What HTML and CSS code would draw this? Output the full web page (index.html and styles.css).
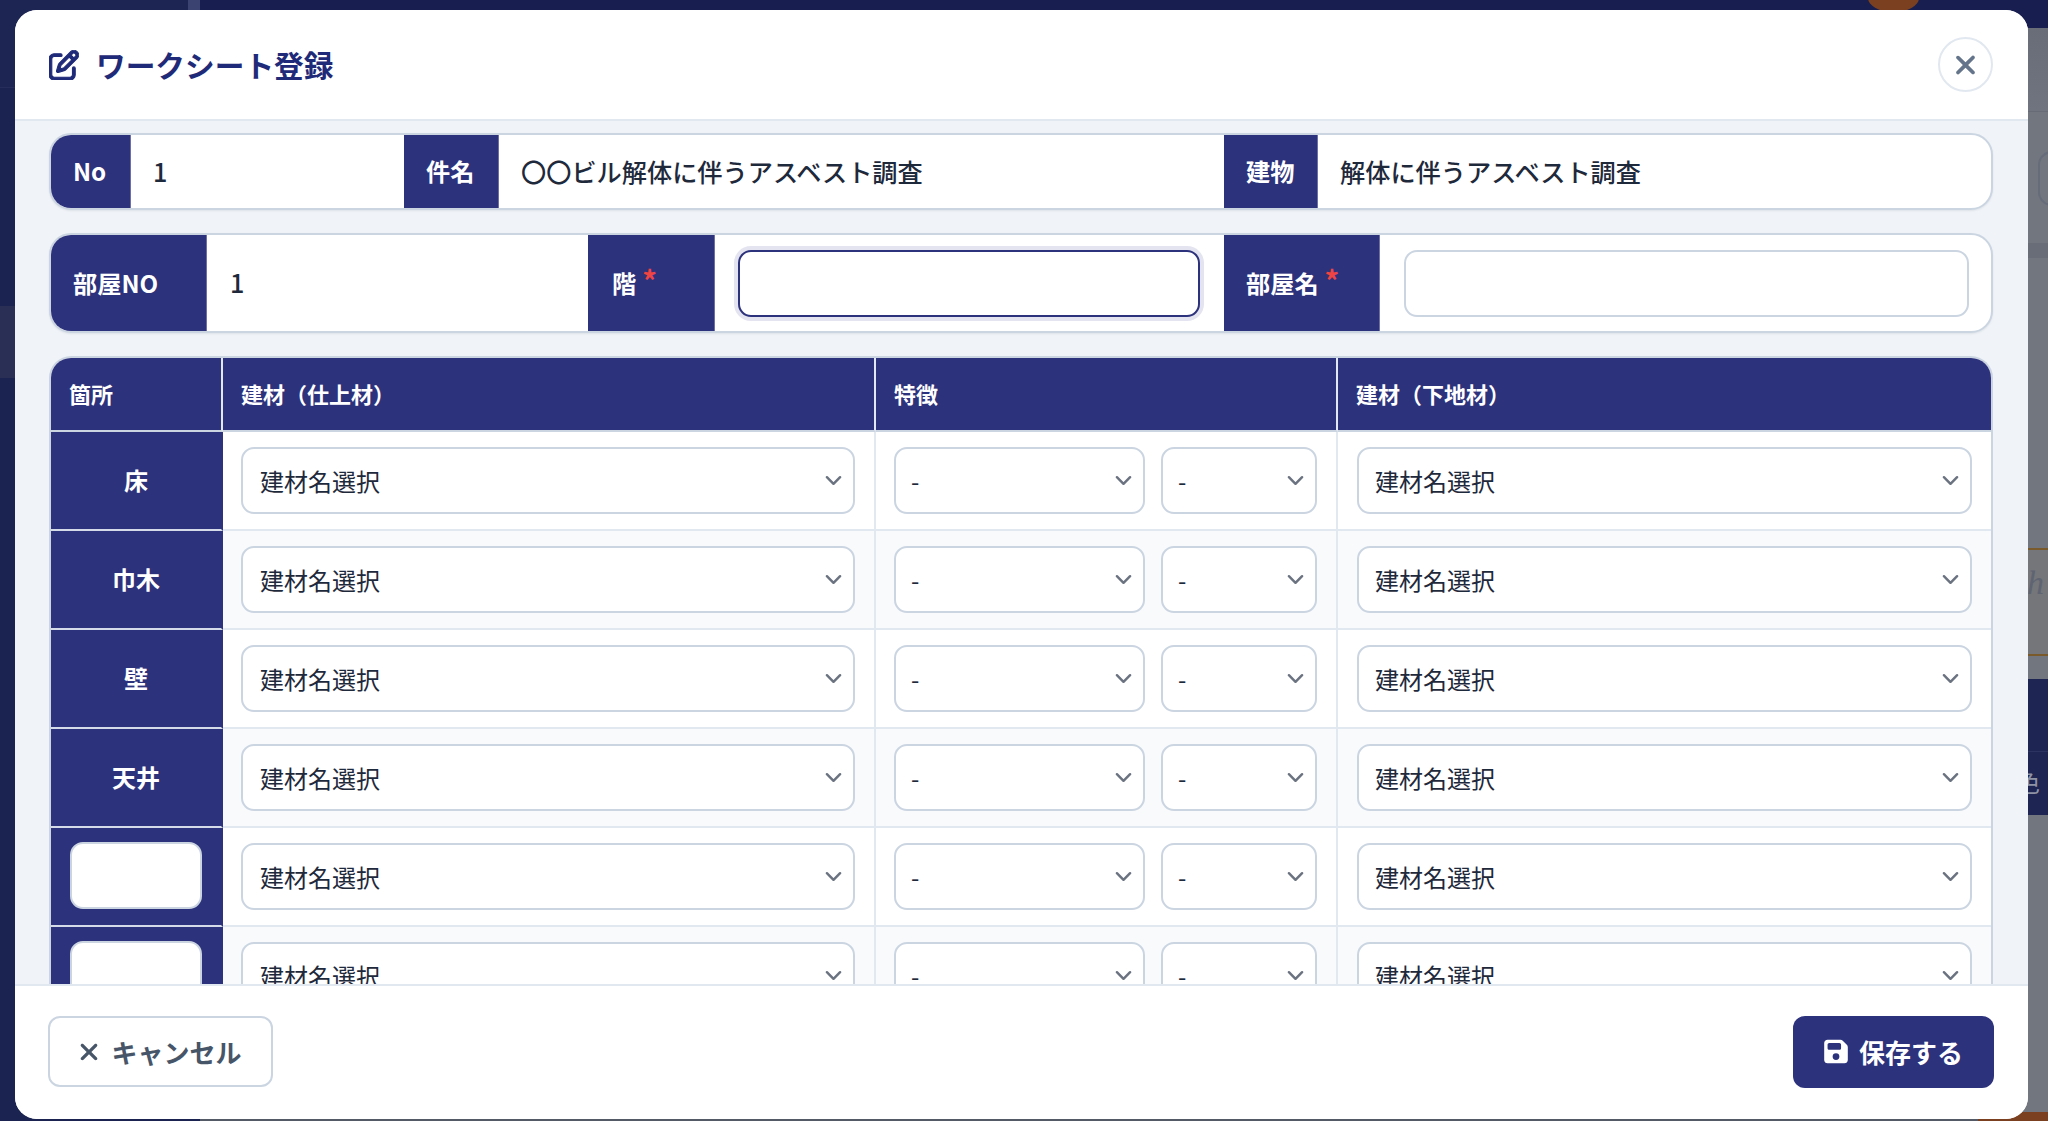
FILE: index.html
```html
<!DOCTYPE html>
<html lang="ja">
<head>
<meta charset="utf-8">
<title>ワークシート登録</title>
<link rel="stylesheet" href="styles.css">
</head>
<body>
<div class="page">
  <aside class="sidebar">
    <div class="side-logo"></div>
    <div class="side-nav"></div>
    <div class="side-active"></div>
    <div class="side-rest"></div>
  </aside>
  <div class="side-edge"></div>
  <main class="main">
    <div class="topbar"><span class="avatar"></span></div>
    <div class="bg-row bg-a"></div>
    <div class="bg-row bg-b"><div class="bg-box"></div></div>
    <div class="bg-row bg-c"></div>
    <div class="bg-row bg-d"></div>
    <div class="bg-row bg-e"><span class="bg-hand">h</span></div>
    <div class="bg-row bg-f"></div>
    <div class="bg-row bg-g"></div>
    <div class="bg-row bg-h"><span class="bg-char">色</span></div>
    <div class="bg-row bg-i"></div>
    <div class="bg-row bg-j"><span class="bg-brown"></span></div>
  </main>
</div>

<section class="modal">
  <header class="modal-head">
    <h1 class="modal-title">
      <svg class="title-icon" viewBox="0 0 512 512"><path d="M441 58.9L453.1 71c9.4 9.4 9.4 24.6 0 33.9L424 134.1 377.9 88 407 58.9c9.4-9.4 24.6-9.4 33.9 0zM209.8 256.2L344 121.9 390.1 168 255.8 302.2c-2.9 2.9-6.5 5-10.4 6.1l-58.5 16.7 16.7-58.5c1.1-3.9 3.2-7.5 6.1-10.4zM373.1 25L175.8 222.2c-8.7 8.7-15 19.4-18.3 31.1l-28.6 100c-2.4 8.4-.1 17.4 6.1 23.6s15.2 8.5 23.6 6.1l100-28.6c11.8-3.4 22.5-9.7 31.1-18.3L487 138.9c28.1-28.1 28.1-73.7 0-101.8L474.9 25C446.8-3.1 401.2-3.1 373.1 25zM88 64C39.4 64 0 103.4 0 152V424c0 48.6 39.4 88 88 88H360c48.6 0 88-39.4 88-88V312c0-13.3-10.7-24-24-24s-24 10.7-24 24V424c0 22.1-17.9 40-40 40H88c-22.1 0-40-17.9-40-40V152c0-22.1 17.9-40 40-40H200c13.3 0 24-10.7 24-24s-10.7-24-24-24H88z"/></svg>
      <span>ワークシート登録</span>
    </h1>
    <button class="close-btn" type="button" aria-label="閉じる">
      <svg class="close-icon" viewBox="0 0 384 512"><path d="M342.6 150.6c12.5-12.5 12.5-32.8 0-45.3s-32.8-12.5-45.3 0L192 210.7 86.6 105.4c-12.5-12.5-32.8-12.5-45.3 0s-12.5 32.8 0 45.3L146.7 256 41.4 361.4c-12.5 12.5-12.5 32.8 0 45.3s32.8 12.5 45.3 0L192 301.3 297.4 406.6c12.5 12.5 32.8 12.5 45.3 0s12.5-32.8 0-45.3L237.3 256 342.6 150.6z"/></svg>
    </button>
  </header>

  <div class="modal-body">
    <div class="panel panel-info">
      <div class="label w-no">No</div>
      <div class="value w-no-v">1</div>
      <div class="label w-subject">件名</div>
      <div class="value w-subject-v">〇〇ビル解体に伴うアスベスト調査</div>
      <div class="label w-building">建物</div>
      <div class="value grow">解体に伴うアスベスト調査</div>
    </div>

    <div class="panel panel-room">
      <div class="label w-roomno">部屋NO</div>
      <div class="value w-roomno-v">1</div>
      <div class="label w-floor">階<span class="req">*</span></div>
      <div class="field w-floor-v"><input class="text-input is-focus" type="text"></div>
      <div class="label w-roomname">部屋名<span class="req">*</span></div>
      <div class="field field-last grow"><input class="text-input" type="text"></div>
    </div>

    <table class="sheet">
      <colgroup>
        <col class="c-place"><col class="c-finish"><col class="c-feature"><col class="c-base">
      </colgroup>
      <thead>
        <tr><th>箇所</th><th>建材（仕上材）</th><th>特徴</th><th>建材（下地材）</th></tr>
      </thead>
      <tbody>
        <tr>
          <th class="place">床</th>
          <td><select class="sel"><option>建材名選択</option></select></td>
          <td><div class="pair"><select class="sel sel-wide"><option>-</option></select><select class="sel sel-narrow"><option>-</option></select></div></td>
          <td><select class="sel sel-base"><option>建材名選択</option></select></td>
        </tr>
        <tr>
          <th class="place">巾木</th>
          <td><select class="sel"><option>建材名選択</option></select></td>
          <td><div class="pair"><select class="sel sel-wide"><option>-</option></select><select class="sel sel-narrow"><option>-</option></select></div></td>
          <td><select class="sel sel-base"><option>建材名選択</option></select></td>
        </tr>
        <tr>
          <th class="place">壁</th>
          <td><select class="sel"><option>建材名選択</option></select></td>
          <td><div class="pair"><select class="sel sel-wide"><option>-</option></select><select class="sel sel-narrow"><option>-</option></select></div></td>
          <td><select class="sel sel-base"><option>建材名選択</option></select></td>
        </tr>
        <tr>
          <th class="place">天井</th>
          <td><select class="sel"><option>建材名選択</option></select></td>
          <td><div class="pair"><select class="sel sel-wide"><option>-</option></select><select class="sel sel-narrow"><option>-</option></select></div></td>
          <td><select class="sel sel-base"><option>建材名選択</option></select></td>
        </tr>
        <tr>
          <th class="place"><input class="place-input" type="text"></th>
          <td><select class="sel"><option>建材名選択</option></select></td>
          <td><div class="pair"><select class="sel sel-wide"><option>-</option></select><select class="sel sel-narrow"><option>-</option></select></div></td>
          <td><select class="sel sel-base"><option>建材名選択</option></select></td>
        </tr>
        <tr>
          <th class="place"><input class="place-input" type="text"></th>
          <td><select class="sel"><option>建材名選択</option></select></td>
          <td><div class="pair"><select class="sel sel-wide"><option>-</option></select><select class="sel sel-narrow"><option>-</option></select></div></td>
          <td><select class="sel sel-base"><option>建材名選択</option></select></td>
        </tr>
      </tbody>
    </table>
  </div>

  <footer class="modal-foot">
    <button class="btn btn-cancel" type="button">
      <svg class="btn-x" viewBox="0 0 384 512"><path d="M342.6 150.6c12.5-12.5 12.5-32.8 0-45.3s-32.8-12.5-45.3 0L192 210.7 86.6 105.4c-12.5-12.5-32.8-12.5-45.3 0s-12.5 32.8 0 45.3L146.7 256 41.4 361.4c-12.5 12.5-12.5 32.8 0 45.3s32.8 12.5 45.3 0L192 301.3 297.4 406.6c12.5 12.5 32.8 12.5 45.3 0s12.5-32.8 0-45.3L237.3 256 342.6 150.6z"/></svg>
      <span>キャンセル</span>
    </button>
    <button class="btn btn-save" type="button">
      <svg class="btn-disk" viewBox="0 0 448 512"><path d="M64 32C28.7 32 0 60.7 0 96V416c0 35.3 28.7 64 64 64H384c35.3 0 64-28.7 64-64V173.3c0-17-6.7-33.3-18.7-45.3L352 50.7C340 38.7 323.7 32 306.7 32H64zm0 96c0-17.7 14.3-32 32-32H288c17.7 0 32 14.3 32 32v64c0 17.7-14.3 32-32 32H96c-17.7 0-32-14.3-32-32V128zM224 288a64 64 0 1 1 0 128 64 64 0 1 1 0-128z"/></svg>
      <span>保存する</span>
    </button>
  </footer>
</section>
</body>
</html>
```

FILE: styles.css
```css
* { box-sizing: border-box; }

html, body {
  margin: 0;
  padding: 0;
  width: 2048px;
  height: 1121px;
  overflow: hidden;
  font-family: "Noto Sans CJK JP", "Noto Sans", sans-serif;
  color: #1e293b;
}

body { position: relative; }

/* dimmed page behind the dialog */
.page {
  display: flex;
  width: 2048px;
  height: 1121px;
  overflow: hidden;
  background: #6f747e;
}

.sidebar { width: 188px; display: flex; flex-direction: column; background: #1b2350; }
.side-logo { height: 88px; background: #1d2553; border-bottom: 1px solid #262d5a; }
.side-nav { height: 218px; background: #1b2350; }
.side-active { height: 72px; background: #2a3055; }
.side-rest { flex: 1; background: #1b2350; }
.side-edge { width: 12px; background: linear-gradient(#3b4370 0 10px, #1b2350 10px); }

.main { flex: 1; display: flex; flex-direction: column; min-width: 0; }

.topbar { position: relative; height: 28px; flex: none; background: #181f50; }
.avatar {
  position: absolute;
  left: 1668px;
  top: -16px;
  width: 51px;
  height: 28px;
  border-radius: 50%;
  background: #7a4020;
}

.bg-row { flex: none; position: relative; overflow: hidden; }
.bg-a { height: 84px; background: linear-gradient(#686d77, #6f747e); border-bottom: 1px solid #666b75; }
.bg-b { height: 131px; padding: 39px 0 0 1838px; background: #71767f; }
.bg-box { width: 40px; height: 55px; border: 2px solid #666c7a; border-right: 0; border-radius: 14px 0 0 14px; }
.bg-c { height: 15px; background: #686d78; }
.bg-d { height: 290px; background: #72767f; }
.bg-e {
  height: 108px;
  background: #74767a;
  border-top: 2px solid #7a5a2a;
  border-bottom: 2px solid #7a5a2a;
}
.bg-hand {
  position: absolute;
  right: 4px;
  top: 14px;
  font: italic 34px "Liberation Serif", serif;
  color: #5f6472;
}
.bg-f { height: 23px; background: #71767f; }
.bg-g { height: 73px; background: #1e2552; border-bottom: 1px solid #2c3360; }
.bg-h { height: 63px; background: #1e2552; }
.bg-char {
  position: absolute;
  left: 1816px;
  top: 14px;
  font-size: 24px;
  line-height: 32px;
  color: #8f93a6;
}
.bg-i { height: 297px; background: #71767f; }
.bg-j { flex: 1; display: flex; justify-content: flex-end; background: #555b66; }
.bg-brown { width: 70px; background: #7a4020; }

/* dialog */
.modal {
  position: absolute;
  left: 15px;
  top: 10px;
  width: 2013px;
  height: 1109px;
  display: flex;
  flex-direction: column;
  background: #fff;
  border-radius: 22px;
  overflow: hidden;
}

.modal-head {
  flex: none;
  height: 111px;
  display: flex;
  align-items: center;
  justify-content: space-between;
  padding: 0 35px 0 34px;
  background: #fff;
  border-bottom: 2px solid #e2e8f0;
}

.modal-title {
  margin: 0;
  display: flex;
  align-items: center;
  gap: 17px;
  font-size: 29.7px;
  font-weight: 700;
  line-height: 40px;
  color: #1f2a78;
}

.title-icon { width: 30px; height: 30px; fill: #1f2a78; stroke: #1f2a78; stroke-width: 18; }

.close-btn {
  display: flex;
  align-items: center;
  justify-content: center;
  width: 55px;
  height: 55px;
  padding: 0;
  background: #fff;
  border: 2px solid #e2e8f0;
  border-radius: 50%;
}

.close-icon { width: 23px; height: 30px; fill: #64748b; }

.modal-body {
  flex: 1;
  min-height: 0;
  overflow: hidden;
  padding: 12px 35px 0 34px;
  background: #f0f4f9;
}

.panel {
  display: flex;
  margin-bottom: 23px;
  background: #fff;
  border: 2px solid #cbd5e1;
  border-radius: 22px;
  box-shadow: 0 1px 2px rgba(15, 23, 42, .08);
  overflow: hidden;
}

.panel-info { height: 77px; }
.panel-room { height: 100px; }

.label {
  flex: none;
  display: flex;
  align-items: center;
  padding: 0 0 2px 22px;
  background: #2d327c;
  color: #fff;
  font-size: 24.2px;
  font-weight: 700;
  border-right: 1px solid #6b6fa6;
}

.value {
  flex: none;
  display: flex;
  align-items: center;
  padding: 0 0 2px 22px;
  font-size: 25.2px;
  font-weight: 500;
  color: #1e293b;
}

.field { flex: none; display: flex; align-items: center; padding: 0 24px 0 23px; }
.field-last { padding: 0 22px 0 24px; }
.grow { flex: 1; min-width: 0; }

.w-no { width: 80px; }
.w-no-v { width: 273px; }
.w-subject { width: 95px; }
.w-subject-v { width: 725px; }
.w-building { width: 94px; }
.w-roomno { width: 156px; }
.w-roomno-v { width: 381px; padding-left: 23px; }
.w-floor { width: 127px; padding-left: 24px; }
.w-floor-v { width: 509px; }
.w-roomname { width: 156px; }

.req {
  margin: -6px 0 0 6px;
  font-size: 29px;
  line-height: 24px;
  color: #ef4444;
}

.text-input {
  display: block;
  width: 100%;
  height: 67px;
  padding: 0 18px;
  background: #fff;
  border: 2px solid #cbd5e1;
  border-radius: 13px;
  outline: 0;
  font: inherit;
}

.is-focus {
  border-color: #2d327c;
  box-shadow: 0 0 0 4px #e3e4ef;
}

/* table */
.sheet {
  width: 1944px;
  table-layout: fixed;
  border-collapse: separate;
  border-spacing: 0;
  background: #fff;
  border: 2px solid #cbd5e1;
  border-bottom: 0;
  border-radius: 22px 22px 0 0;
  overflow: hidden;
}

.c-place { width: 172px; }
.c-finish { width: 653px; }
.c-feature { width: 462px; }

.sheet thead th {
  height: 74px;
  padding: 0 18px 2px 18px;
  background: #2d327c;
  color: #fff;
  font-size: 22px;
  font-weight: 700;
  text-align: left;
  border-right: 2px solid #e2e8f0;
  border-bottom: 2px solid #cbd5e1;
}

.sheet thead th:last-child { border-right: 0; }

.sheet tbody tr:nth-child(even) td { background: #f8fafc; }

.sheet td {
  height: 99px;
  padding: 0 19px 0 18px;
  border-right: 2px solid #e2e8f0;
  border-bottom: 2px solid #e2e8f0;
}

.sheet td:last-child { border-right: 0; padding: 0 19px; }

.place {
  height: 99px;
  padding: 0 19px 2px;
  background: #2d327c;
  color: #fff;
  font-size: 24px;
  font-weight: 700;
  text-align: center;
  border-right: 2px solid #2d327c;
  border-bottom: 2px solid #d5dbe8;
}

.place-input {
  display: block;
  width: 132px;
  height: 67px;
  background: #fff;
  border: 2px solid #cbd5e1;
  border-radius: 13px;
}

.sel {
  display: block;
  width: 100%;
  height: 67px;
  padding: 0 44px 0 17px;
  appearance: none;
  -webkit-appearance: none;
  background-color: #fff;
  background-image: url("data:image/svg+xml,%3Csvg xmlns='http://www.w3.org/2000/svg' fill='none' viewBox='0 0 20 20'%3E%3Cpath stroke='%236b7280' stroke-linecap='round' stroke-linejoin='round' stroke-width='1.5' d='M6 8l4 4 4-4'/%3E%3C/svg%3E");
  background-repeat: no-repeat;
  background-position: right 3px center;
  background-size: 33px 33px;
  border: 2px solid #cbd5e1;
  border-radius: 13px;
  font-family: inherit;
  font-size: 24px;
  color: #1e293b;
}

.sel-base { padding-left: 16px; }

.pair { display: flex; gap: 16px; }
.sel-wide { width: 251px; flex: none; padding-left: 15px; }
.sel-narrow { width: 156px; flex: none; padding-left: 15px; }

/* footer */
.modal-foot {
  flex: none;
  height: 135px;
  display: flex;
  align-items: center;
  justify-content: space-between;
  padding: 0 34px 2px 33px;
  background: #fff;
  border-top: 2px solid #e2e8f0;
}

.btn {
  display: flex;
  align-items: center;
  justify-content: center;
  font-family: inherit;
  font-size: 26px;
  font-weight: 700;
  border-radius: 12px;
}

.btn-cancel {
  width: 225px;
  height: 71px;
  gap: 12px;
  padding: 0;
  background: #fff;
  border: 2px solid #cbd5e1;
  color: #475569;
}

.btn-x { width: 20px; height: 28px; fill: #475569; }

.btn-save {
  width: 201px;
  height: 72px;
  gap: 11px;
  padding: 0;
  background: #2d327c;
  border: 0;
  color: #fff;
  font-size: 26px;
}

.btn-disk { width: 24px; height: 27px; fill: #fff; }
```
